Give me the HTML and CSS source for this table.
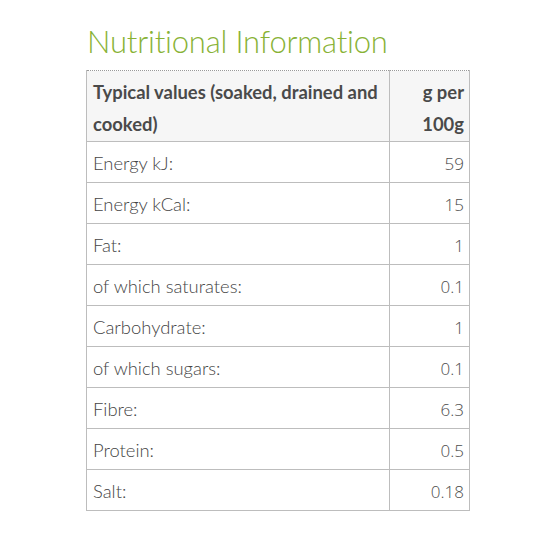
FILE: index.html
```html
<!DOCTYPE html>
<html lang="en">
<head>
    <meta charset="UTF-8">
    <title>Nutritional Information</title>
    <link rel="stylesheet" href="styles.css">
</head>
<body>
    <div class="nutrition">
        <h2>Nutritional Information</h2>
        <table class="nutrition-table">
            <thead>
                <tr>
                    <th>Typical values (soaked, drained and cooked)</th>
                    <th class="num">g per 100g</th>
                </tr>
            </thead>
            <tbody>
                <tr><td>Energy kJ:</td><td class="num">59</td></tr>
                <tr><td>Energy kCal:</td><td class="num">15</td></tr>
                <tr><td>Fat:</td><td class="num">1</td></tr>
                <tr><td>of which saturates:</td><td class="num">0.1</td></tr>
                <tr><td>Carbohydrate:</td><td class="num">1</td></tr>
                <tr><td>of which sugars:</td><td class="num">0.1</td></tr>
                <tr><td>Fibre:</td><td class="num">6.3</td></tr>
                <tr><td>Protein:</td><td class="num">0.5</td></tr>
                <tr><td>Salt:</td><td class="num">0.18</td></tr>
            </tbody>
        </table>
    </div>
</body>
</html>
```

FILE: styles.css
```css
* {
    box-sizing: border-box;
    margin: 0;
    padding: 0;
}

body {
    background: #fff;
    font-family: Lato, 'Open Sans', sans-serif;
    color: #555;
}

.nutrition {
    padding: 22px 0 0 86px;
    width: 470px;
}

h2 {
    font-weight: 300;
    font-size: 31px;
    line-height: 38px;
    color: #88b235;
    margin: 0 0 10px 1px;
    letter-spacing: -0.2px;
}

.nutrition-table {
    width: 384px;
    border-collapse: collapse;
    font-size: 18.4px;
}

.nutrition-table th,
.nutrition-table td {
    border: 1px solid #bdbdbd;
    padding: 0 6px;
    text-align: left;
    vertical-align: middle;
}

.nutrition-table th {
    background: #f6f6f6;
    font-weight: bold;
    line-height: 32px;
    height: 70px;
    padding: 5px 5px 1px 6px;
    color: #4a4a4a;
    border-top: 1px dotted #999;
}

.nutrition-table th:first-child {
    width: 303px;
}

.nutrition-table td {
    height: 41px;
    font-weight: 300;
    color: #444;
    padding-top: 2px;
}

.nutrition-table .num {
    text-align: right;
    padding-right: 5px;
}

.nutrition-table td.num {
    font-family: 'Open Sans', sans-serif;
    font-size: 17px;
    font-weight: 300;
    color: #4d4d4d;
}
```
